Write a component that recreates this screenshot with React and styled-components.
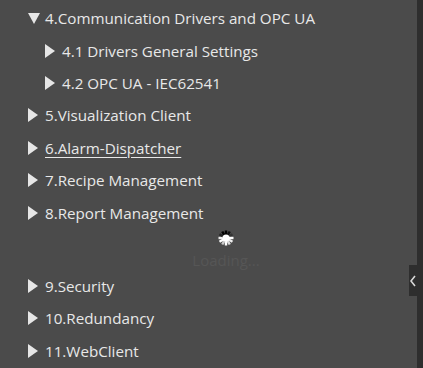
import React from 'react';
import styled, { createGlobalStyle } from 'styled-components';

const GlobalStyle = createGlobalStyle`
  html, body {
    margin: 0;
    padding: 0;
    background: #4b4b4b;
  }
  body {
    font-family: "Open Sans", "Noto Sans", sans-serif;
  }
`;

const items = [
  { label: '4.Communication Drivers and OPC UA', level: 0, open: true },
  { label: '4.1 Drivers General Settings', level: 1 },
  { label: '4.2 OPC UA - IEC62541', level: 1 },
  { label: '5.Visualization Client', level: 0 },
  { label: '6.Alarm-Dispatcher', level: 0, underline: true },
  { label: '7.Recipe Management', level: 0 },
  { label: '8.Report Management', level: 0 },
  { loading: true },
  { label: '9.Security', level: 0 },
  { label: '10.Redundancy', level: 0 },
  { label: '11.WebClient', level: 0 },
];

const Caret = ({ open }) => (
  <CaretBox>
    {open ? (
      <svg width="12" height="11" viewBox="0 0 12 11">
        <polygon points="0,0 12,0 6,11" fill="#e6e6e6" />
      </svg>
    ) : (
      <svg width="10" height="14" viewBox="0 0 10 14">
        <polygon points="0,0 10,7 0,14" fill="#e6e6e6" />
      </svg>
    )}
  </CaretBox>
);

const Spinner = () => {
  const shades = ['#000', '#111', '#333', '#fff', '#eee', '#ddd', '#fff', '#ccc', '#fff', '#eee', '#222', '#000'];
  return (
    <svg width="16" height="16" viewBox="-8 -8 16 16">
      {shades.map((c, i) => (
        <rect
          key={i}
          x="-1.2"
          y="-7.5"
          width="2.4"
          height="4.5"
          fill={c}
          transform={`rotate(${i * 30})`}
        />
      ))}
      <circle r="3.6" fill="#fff" />
    </svg>
  );
};

export default function App() {
  return (
    <>
      <GlobalStyle />
      <Page>
        <Tree>
          {items.map((it, i) =>
            it.loading ? (
              <Loading key={i}>
                <Spinner />
                <LoadingText>Loading...</LoadingText>
              </Loading>
            ) : (
              <Row key={i} level={it.level}>
                <Caret open={it.open} />
                <Label underline={it.underline}>{it.label}</Label>
              </Row>
            )
          )}
        </Tree>
        <Edge>
          <CollapseTab>
            <svg width="6" height="12" viewBox="0 0 6 12">
              <polyline points="5,1 1,6 5,11" fill="none" stroke="#d8d8d8" strokeWidth="1.6" />
            </svg>
          </CollapseTab>
        </Edge>
      </Page>
    </>
  );
}

const Page = styled.div`
  display: flex;
  width: 423px;
  height: 368px;
  overflow: hidden;
  background: #4b4b4b;
`;

const Tree = styled.div`
  flex: 1;
  display: flex;
  flex-direction: column;
  padding-top: 2px;
`;

const Row = styled.div`
  display: flex;
  align-items: center;
  height: 32.4px;
  padding-left: ${props => 28 + props.level * 17}px;
  flex-shrink: 0;
`;

const CaretBox = styled.span`
  width: 17px;
  display: flex;
  align-items: center;
  svg {
    display: block;
  }
`;

const Label = styled.span`
  font-size: 15.2px;
  color: #e8e8e8;
  white-space: nowrap;
  text-decoration: ${props => (props.underline ? 'underline' : 'none')};
  text-underline-offset: 3px;
`;

const Loading = styled.div`
  height: 40px;
  flex-shrink: 0;
  display: flex;
  flex-direction: column;
  align-items: center;
  padding-top: 1px;
  padding-left: 35px;
`;

const LoadingText = styled.span`
  margin-top: 4px;
  font-size: 15px;
  color: #565656;
`;

const Edge = styled.div`
  width: 6px;
  background: #2e2e2e;
  position: relative;
`;

const CollapseTab = styled.div`
  position: absolute;
  right: 6px;
  top: 265px;
  width: 8px;
  height: 31px;
  background: #2e2e2e;
  display: flex;
  align-items: center;
  justify-content: center;
`;
